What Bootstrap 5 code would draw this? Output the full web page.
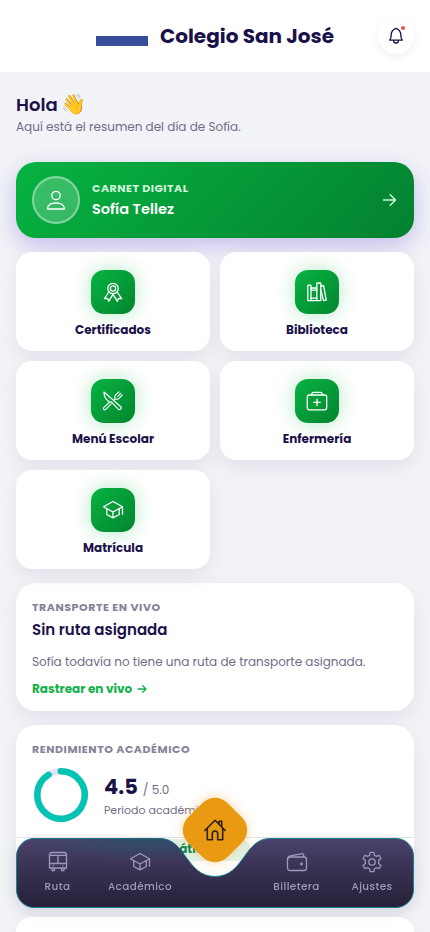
<!DOCTYPE html>
<html lang="es">
<head>
<meta charset="utf-8">
<meta name="viewport" content="width=device-width, initial-scale=1">
<title>Colegio San José</title>
<link href="https://cdn.jsdelivr.net/npm/bootstrap@5.3.0/dist/css/bootstrap.min.css" rel="stylesheet">
<style>
html,body{height:932px;overflow:hidden}
body{background:#f1f3f7;color:#1b1149;font-family:Poppins,Inter,"Noto Sans",sans-serif;font-size:12px;line-height:18px}
svg{display:block;fill:none;stroke:currentColor;stroke-width:1.3;stroke-linecap:round;stroke-linejoin:round}
.topbar{height:72px}
.crest{width:52px;height:52px;padding-top:26px}
.crest span{display:block;height:10px;background:#354d9b}
.brand{font-size:20px;font-weight:700;line-height:28px}
.bell,.bell:hover{width:36px;height:36px;right:16px;top:18px;color:#1b1149;background:#fff;box-shadow:0 3px 9px rgba(27,17,73,.07)}
.dot{width:4px;height:4px;background:#ea5545;right:9px;top:8px}
.page{padding:20px 16px 0}
.hello{font-size:18px;line-height:26px;font-weight:600}
.wave{font-size:20px;line-height:1;margin-left:-1px}
.muted{color:#716d87}
.intro{margin:0 0 26px}
.carnet{height:76px;border-radius:20px;color:#fff;background:linear-gradient(135deg,#07b342,#03812f);box-shadow:0 8px 22px rgba(91,50,200,.28);padding:0 17px 0 16px;margin-bottom:14px}
.go{color:#cff5dc;stroke-width:1.5}
.avatar{width:48px;height:48px;background:rgba(255,255,255,.2);border:2px solid rgba(255,255,255,.38)}
.eyebrow{font-size:11px;line-height:16px;font-weight:700;letter-spacing:.55px;color:#858198}
.carnet .eyebrow{color:#cff5dc;letter-spacing:.5px}
.who{font-size:14.5px;line-height:22px;font-weight:600;padding-top:2px}
.panel{background:#fff;border-radius:20px;box-shadow:0 8px 20px rgba(27,17,73,.065)}
.tiles{display:grid;grid-template-columns:1fr 1fr;gap:10px;margin-bottom:14px}
.tile{height:99px;padding-top:18px;font-weight:700;border-radius:16px}
.tile-ico{width:44px;height:44px;border-radius:13px;color:#fff;background:linear-gradient(135deg,#07b342,#03852f);box-shadow:0 0 20px rgba(7,179,66,.3);margin-bottom:7px}
.fine{stroke-width:1.15}
.ride{height:128px;padding:16px;margin-bottom:14px}
.ride-title{font-size:15px;line-height:22px;font-weight:600;margin:4px 0 12px}
.ride-link{color:#12b14a;font-weight:700;margin-top:9px;gap:5px}
.grades{height:178px;padding:16px 0 0;margin-bottom:14px}
.ring{stroke-width:6.5}
.ring-track{stroke:#e6e0f6}
.ring-value{stroke:#05c3b3}
.figures{padding:1px 0 0 14px}
.score{font-size:21px;line-height:28px;font-weight:700}
.scale{margin-left:5px}
.period{font-size:11px;line-height:16px;margin-top:1px}
.subjects{border-top:1px solid #e3e4e8;margin-top:12px;padding:1px 16px 0 111px}
.chip{display:inline-block;height:22px;line-height:20px;border-radius:11px;background:#e0f6ea;color:#078458;font-weight:700;padding:0 33px 0 8px}
.next-card{height:15px;border-radius:20px 20px 0 0}
.dock{position:fixed;left:16px;top:797px;width:398px;height:111px}
.dock-bg{position:absolute;left:0;top:40px;stroke-width:1;filter:drop-shadow(0 4px 7px rgba(27,17,73,.08))}
.dock-items{position:absolute;inset:41px 0 0 0;color:#9f9abc;font-size:10.4px;line-height:16px;font-weight:500}
.dock-item{display:flex;flex-direction:column;align-items:center;gap:6px;padding-top:13px;letter-spacing:.42px}
.home{position:absolute;left:171px;top:5px;width:56px;height:56px;border-radius:18px;transform:rotate(45deg);background:#e99a12;color:#2b2018;box-shadow:0 0 12px rgba(240,155,30,.4)}
.home svg{transform:rotate(-45deg);stroke-width:1.6}
.w-a{width:83px}.w-b{width:82px}.w-gap{width:74px}.w-d{width:83px}.w-e{width:68px}
</style>
</head>
<body>
<header class="topbar bg-white position-relative d-flex align-items-center justify-content-center">
  <div class="crest me-2"><span></span></div>
  <div class="brand ms-1">Colegio San José</div>
  <button class="bell btn p-0 border-0 rounded-circle position-absolute d-flex align-items-center justify-content-center" aria-label="Notificaciones">
    <svg width="18" height="18" viewBox="0 0 18 18"><path d="M2.700 13.200c.9-1.300 1.500-2.400 1.500-5.200C4.200 4.500 6.200 2.300 9 1.300c2.800 1 4.800 3.200 4.800 6.700 0 2.800.6 3.900 1.500 5.200zM6.600 13.400a2.400 2.600 0 0 0 4.800 0"/></svg>
    <span class="dot rounded-circle position-absolute"></span>
  </button>
</header>
<main class="page">
  <h1 class="hello mb-0">Hola <span class="wave">👋</span></h1>
  <p class="intro muted">Aquí está el resumen del día de Sofía.</p>

  <a class="carnet d-flex align-items-center text-decoration-none">
    <div class="avatar rounded-circle d-flex align-items-center justify-content-center">
      <svg width="20" height="22" viewBox="0 0 20 22"><circle cx="10" cy="6.500" r="4.200"/><path d="M1.500 20c0-4 3.500-6 8.500-6s8.500 2 8.500 6z"/></svg>
    </div>
    <div class="ms-2 ps-1 flex-grow-1">
      <div class="eyebrow">CARNET DIGITAL</div>
      <div class="who">Sofía Tellez</div>
    </div>
    <svg class="go" width="15" height="14" viewBox="0 0 15 14"><path d="M1.500 7h12M8.300 1.700 13.500 7l-5.200 5.300"/></svg>
  </a>

  <section class="tiles">
    <div class="tile panel d-flex flex-column align-items-center">
      <div class="tile-ico d-flex align-items-center justify-content-center"><svg width="20" height="20" viewBox="0 0 20 20"><circle cx="10" cy="6.500" r="5.200"/><circle cx="10" cy="6.500" r="2.600"/><path d="M5.800 10 1.400 16.600l3.100-.2 1.300 2.800L10 12.300l4.200 6.900 1.300-2.800 3.100.2L14.200 10"/></svg></div>
      <span>Certificados</span>
    </div>
    <div class="tile panel d-flex flex-column align-items-center">
      <div class="tile-ico d-flex align-items-center justify-content-center"><svg width="20" height="20" viewBox="0 0 20 20"><rect x=".8" y="3.200" width="3.200" height="15.500" rx=".5"/><path d="M4 6h5.800M4 8.200h5.800M4 16.200h5.800M4 18.700h5.800"/><rect x="9.800" y="1" width="4" height="17.700" rx=".5"/><path d="m13.800 4 2.800-.4 2.600 14.500-2.700.5-2.600-10.400"/></svg></div>
      <span>Biblioteca</span>
    </div>
    <div class="tile panel d-flex flex-column align-items-center">
      <div class="tile-ico d-flex align-items-center justify-content-center"><svg class="fine" width="20" height="20" viewBox="0 0 20 20"><path d="M1 1c-.2 3.600 1 6 3.300 8.200l2.400 1.800 1.600-.2 6.900 7.400c1.700 1.400 4-.6 2.600-2.500zM8.200 12.800l-5.400 5.600C1.200 19.700-.3 17.700.9 16.400L6.700 11M16 .8 12.900 3.700c-1.300 1.300-1.500 2.700-.7 4.100 1.400.8 2.800.6 4.100-.7L19.200 4M17.700 2.400l-2.900 2.900M12.200 7.800l-1.100 1.100"/></svg></div>
      <span>Menú Escolar</span>
    </div>
    <div class="tile panel d-flex flex-column align-items-center">
      <div class="tile-ico d-flex align-items-center justify-content-center"><svg width="22" height="20" viewBox="0 0 22 20"><rect x="1.300" y="4" width="19.400" height="14.800" rx="2"/><path d="M5.800 4V3a1.600 1.600 0 0 1 1.600-1.600h7.200A1.600 1.600 0 0 1 16.200 3v1M11 8.200v6.400M7.800 11.400h6.400"/></svg></div>
      <span>Enfermería</span>
    </div>
    <div class="tile panel d-flex flex-column align-items-center">
      <div class="tile-ico d-flex align-items-center justify-content-center"><svg width="22" height="20" viewBox="0 0 22 20"><path d="M1.500 6.800 11 1.500l9.500 5.300L11 12zM4.700 8.700v5.800l6.300 3.300 6.300-3.300V8.700M11 12v5.600M20.500 6.800v7.400"/></svg></div>
      <span>Matrícula</span>
    </div>
  </section>

  <section class="ride panel">
    <div class="eyebrow">TRANSPORTE EN VIVO</div>
    <h2 class="ride-title">Sin ruta asignada</h2>
    <p class="ride-text muted mb-0">Sofía todavía no tiene una ruta de transporte asignada.</p>
    <a class="ride-link d-flex align-items-center text-decoration-none">Rastrear en vivo
      <svg width="10" height="10" viewBox="0 0 10 10"><path d="M1 5h8M5.700 1.700 9 5 5.700 8.300"/></svg></a>
  </section>

  <section class="grades panel">
    <div class="px-3">
      <div class="eyebrow">RENDIMIENTO ACADÉMICO</div>
      <div class="d-flex align-items-center mt-2">
        <svg class="ring" width="58" height="60" viewBox="0 0 58 60"><circle class="ring-track" cx="29" cy="30" r="23.700"/><path class="ring-value" d="M28.800 6.300A23.700 23.700 0 1 1 16.600 9.800"/></svg>
        <div class="figures">
          <div class="d-flex align-items-baseline"><span class="score">4.5</span><span class="scale muted">/ 5.0</span></div>
          <div class="period muted">Periodo académico</div>
        </div>
      </div>
    </div>
    <div class="subjects"><span class="chip">Matemáticas</span></div>
  </section>
  <section class="panel next-card"></section>
</main>

<nav class="dock">
  <svg class="dock-bg" width="398" height="72" viewBox="0 0 398 72">
    <defs>
      <linearGradient id="dusk" x1="0" y1="0" x2="0" y2="1"><stop offset="0" stop-color="#4b426c"/><stop offset=".5" stop-color="#37304f"/><stop offset="1" stop-color="#262039"/></linearGradient>
      <radialGradient id="tint" cx=".33" cy="0" r=".32"><stop offset="0" stop-color="#245068" stop-opacity=".75"/><stop offset="1" stop-color="#245068" stop-opacity="0"/></radialGradient>
    </defs>
    <g stroke="#207f88">
      <path fill="url(#dusk)" d="M18 1.500H144C170 1.500 170 39.500 199 39.500S228 1.500 254 1.500H380A17.500 17.500 0 0 1 397.500 19V53A17.500 17.500 0 0 1 380 70.500H18A17.500 17.500 0 0 1 .5 53V19A17.500 17.500 0 0 1 18 1.500Z"/>
      <path stroke="none" fill="url(#tint)" d="M18 1.500H144C170 1.500 170 39.500 199 39.500S228 1.500 254 1.500H380A17.500 17.500 0 0 1 397.500 19V53A17.500 17.500 0 0 1 380 70.500H18A17.500 17.500 0 0 1 .5 53V19A17.500 17.500 0 0 1 18 1.500Z"/>
    </g>
  </svg>
  <div class="dock-items d-flex">
    <div class="dock-item w-a"><svg width="20" height="22" viewBox="0 0 20 22"><path d="M1.500 17V4A2.500 2.500 0 0 1 4 1.500h12A2.500 2.500 0 0 1 18.500 4v13zM1.500 4.300h17M1.500 12.500h17M10 4.300v8.200M4 17v2.500h2.500V17M13.500 17v2.500H16V17M5 14.800h.4M14.600 14.800h.4"/></svg>Ruta</div>
    <div class="dock-item w-b"><svg width="22" height="22" viewBox="0 0 22 22"><path d="M1.500 7.800 11 2.500l9.500 5.300L11 13zM4.700 9.700v5.800l6.300 3.300 6.300-3.300V9.700M11 13v5.600M20.500 7.800v7.400"/></svg>Académico</div>
    <div class="w-gap"></div>
    <div class="dock-item w-d"><svg width="22" height="22" viewBox="0 0 22 22"><rect x="1.500" y="6" width="19" height="13.500" rx="2.500"/><path d="M1.500 8.500c0-2.500 1-3.300 3-3.700l10.300-2c2-.4 3 .5 3 2.200v1"/><circle cx="15.500" cy="13" r=".8" fill="currentColor"/></svg>Billetera</div>
    <div class="dock-item w-e"><svg width="22" height="22" viewBox="0 0 22 22"><circle cx="11" cy="11" r="3.200"/><path d="M9.200 1.300h3.600l.6 2.900 1.800 1.100 2.900-1 1.800 3.200-2.200 1.900v3.200l2.200 1.900-1.800 3.200-2.900-1-1.800 1.100-.6 2.900H9.200l-.6-2.900-1.800-1.100-2.900 1-1.800-3.200 2.200-1.900V9.400L2.100 7.500l1.800-3.200 2.900 1 1.800-1.100z"/></svg>Ajustes</div>
  </div>
  <div class="home d-flex align-items-center justify-content-center">
    <svg width="24" height="24" viewBox="0 0 24 24"><path d="M1.800 12.500 12 2.300l10.200 10.200M4.300 10.500v11.200h5v-6a2.700 2.700 0 0 1 5.400 0v6h5V10.500M16 6V3.300h2.700v5.500"/></svg>
  </div>
</nav>
<script src="https://cdn.jsdelivr.net/npm/bootstrap@5.3.0/dist/js/bootstrap.bundle.min.js"></script>
</body>
</html>
